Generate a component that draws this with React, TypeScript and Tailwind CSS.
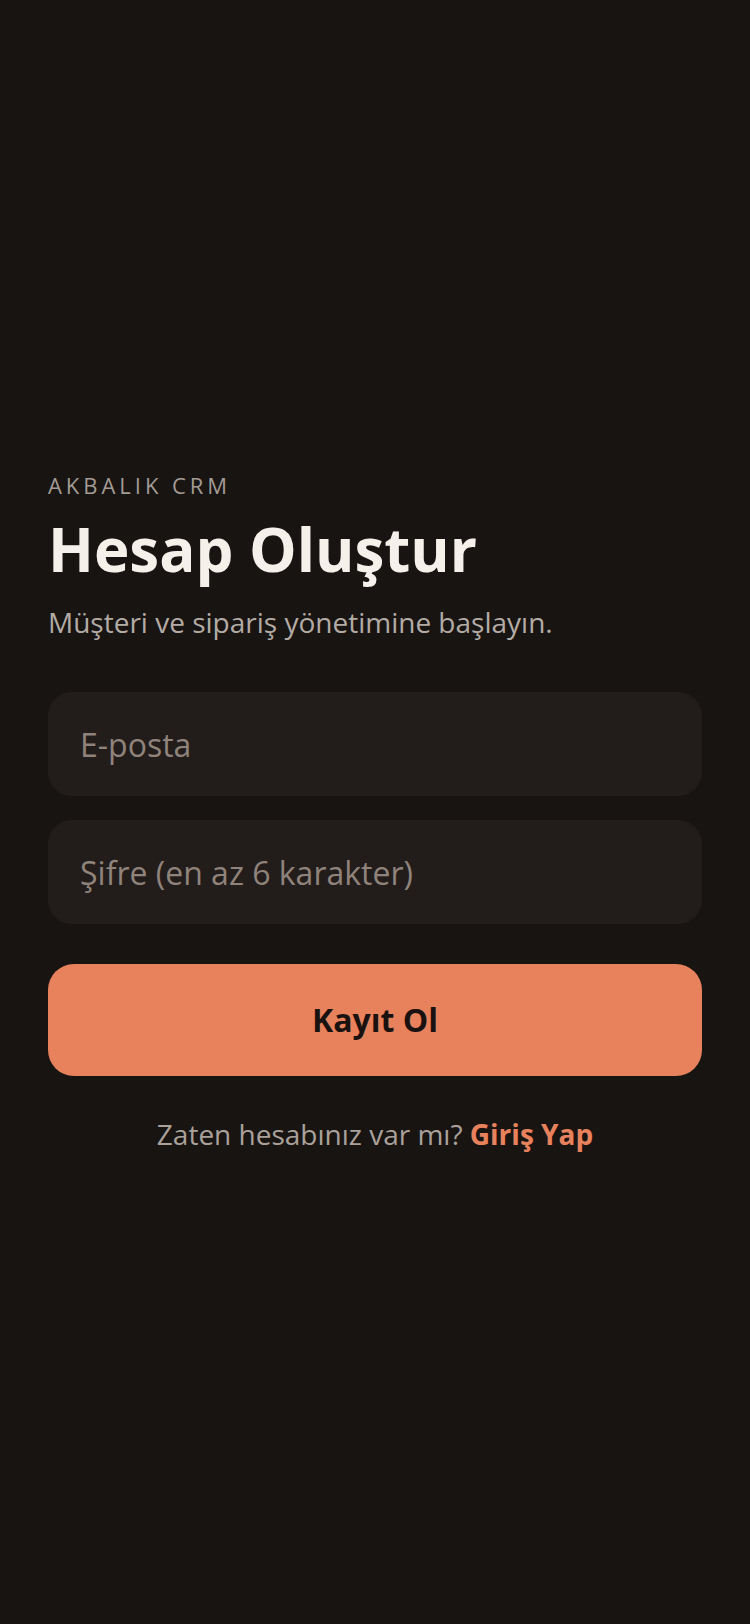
import React from "react";

export default function App() {
  return (
    <div
      className="min-h-screen bg-[#181412] flex flex-col justify-center px-12"
      style={{ fontFamily: '"Open Sans", "Noto Sans", sans-serif' }}
    >
      <div className="text-[22px] leading-[30px] tracking-[0.18em] text-[#a39b95] uppercase">
        Akbalık CRM
      </div>
      <h1 className="mt-[13px] text-[60px] leading-[72px] font-bold text-[#f5f0ea]">
        Hesap Oluştur
      </h1>
      <p className="mt-[17px] text-[28px] leading-[40px] text-[#b3aba5]">
        Müşteri ve sipariş yönetimine başlayın.
      </p>

      <form className="mt-[50px] flex flex-col" onSubmit={(e) => e.preventDefault()}>
        <input
          type="email"
          placeholder="E-posta"
          className="h-[104px] rounded-[24px] bg-[#221d1b] px-8 text-[32px] text-[#f5f0ea] placeholder:text-[#8f837c] outline-none"
        />
        <input
          type="password"
          placeholder="Şifre (en az 6 karakter)"
          className="mt-6 h-[104px] rounded-[24px] bg-[#221d1b] px-8 text-[32px] text-[#f5f0ea] placeholder:text-[#8f837c] outline-none"
        />
        <button
          type="submit"
          className="mt-10 h-[112px] rounded-[26px] bg-[#e8825c] text-[32px] font-bold text-[#1a1210]"
        >
          Kayıt Ol
        </button>
      </form>

      <p className="mt-[38px] text-center text-[28px] leading-[40px] text-[#aaa19b]">
        Zaten hesabınız var mı?{" "}
        <a href="#" className="font-bold text-[#e8825c]">
          Giriş Yap
        </a>
      </p>
    </div>
  );
}
